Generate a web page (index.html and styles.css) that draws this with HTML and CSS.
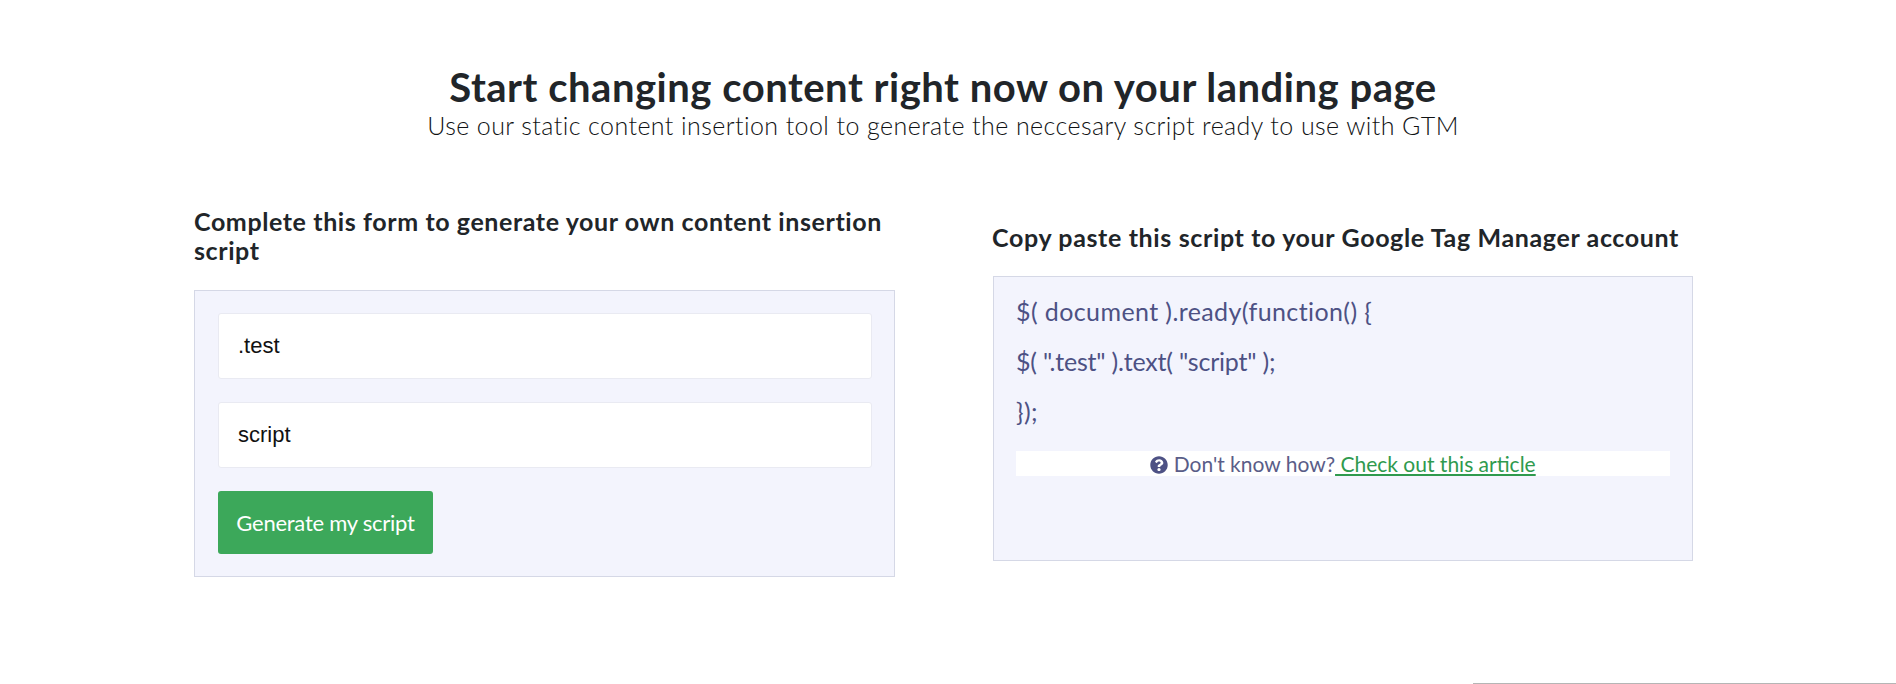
FILE: index.html
```html
<!DOCTYPE html>
<html lang="en">
<head>
<meta charset="utf-8">
<title>Static content insertion tool</title>
<link rel="stylesheet" href="styles.css">
</head>
<body>
<main class="page">
  <header class="intro">
    <h1 class="intro-title">Start changing content right now on your landing page</h1>
    <p class="intro-sub">Use our static content insertion tool to generate the neccesary script ready to use with GTM</p>
  </header>
  <section class="columns">
    <div class="col">
      <h2 class="col-title col-title-form">Complete this form to generate your own content insertion script</h2>
      <form class="panel form-panel">
        <input class="field" type="text" value=".test">
        <input class="field" type="text" value="script">
        <button class="btn" type="button">Generate my script</button>
      </form>
    </div>
    <div class="col">
      <h2 class="col-title">Copy paste this script to your Google Tag Manager account</h2>
      <div class="panel code-panel">
        <p class="code-line">$( document ).ready(function() {</p>
        <p class="code-line code-line-tight">$( ".test" ).text( "script" );</p>
        <p class="code-line">});</p>
        <p class="help">
          <svg class="help-icon" viewBox="0 0 512 512" aria-hidden="true"><path d="M504 256c0 136.997-111.043 248-248 248S8 392.997 8 256C8 119.083 119.043 8 256 8s248 111.083 248 248zM262.655 90c-54.497 0-89.255 22.957-116.549 63.758-3.536 5.286-2.353 12.415 2.715 16.258l34.699 26.31c5.205 3.947 12.621 3.008 16.665-2.122 17.864-22.658 30.113-35.797 57.303-35.797 20.429 0 45.698 13.148 45.698 32.958 0 14.976-12.363 22.667-32.534 33.976C247.128 238.528 216 254.941 216 296v4c0 6.627 5.373 12 12 12h56c6.627 0 12-5.373 12-12v-1.333c0-28.462 83.186-29.647 83.186-106.667 0-58.002-60.165-102-116.531-102zM256 338c-25.365 0-46 20.635-46 46 0 25.364 20.635 46 46 46s46-20.636 46-46c0-25.365-20.635-46-46-46z"/></svg>
          Don't know how?<a class="help-link" href="#"> Check out this article</a>
        </p>
      </div>
    </div>
  </section>
</main>
<div class="edge"></div>
</body>
</html>
```
FILE: styles.css
```css
* { box-sizing: border-box; }
html, body { margin: 0; padding: 0; }
body {
  height: 684px;
  overflow: hidden;
  display: flex;
  flex-direction: column;
  background: #fff;
  font-family: Lato, "Open Sans", sans-serif;
  color: #212529;
}
.page { flex: 1; padding: 0 203px 0 194px; }
.intro { padding-top: 62px; text-align: center; margin-left: -1px; }
.intro-title {
  margin: 0;
  font-size: 40px;
  line-height: 50px;
  font-weight: 700;
  color: #212529;
  letter-spacing: 0.52px;
}
.intro-sub {
  margin: 0;
  font-size: 25px;
  line-height: 26px;
  font-weight: 300;
  color: #101214;
  letter-spacing: 0.42px;
}
.columns {
  display: grid;
  grid-template-columns: 701px 700px;
  column-gap: 98px;
  align-items: center;
  margin-top: 69px;
}
.col-title {
  margin: 0 0 24px;
  font-size: 25px;
  line-height: 29px;
  font-weight: 700;
  color: #212529;
  letter-spacing: 0.64px;
  margin-left: -1px;
}
.col-title-form { margin: 0 0 25px; letter-spacing: 0.6px; }
.panel {
  background: #f3f4fd;
  border: 1px solid #d5d8e6;
  padding: 22px;
}
.form-panel { display: flex; flex-direction: column; align-items: flex-start; padding: 22px 22px 22px 23px; }
.field {
  display: block;
  flex: none;
  width: 100%;
  height: 66px;
  margin-bottom: 23px;
  padding: 0 19px;
  background: #fff;
  border: 1px solid #e9eaf2;
  border-radius: 3px;
  font-family: "Liberation Sans", Arial, sans-serif;
  font-size: 22px;
  color: #111;
  outline: none;
}
.btn {
  flex: none;
  width: 215px;
  height: 63px;
  padding: 0;
  background: #3ca85a;
  border: 0;
  border-radius: 3px;
  font-family: Lato, sans-serif;
  font-size: 22px;
  letter-spacing: -0.25px;
  color: #fff;
}
.code-panel { height: 285px; padding-top: 17px; color: #4d5184; }
.code-line {
  margin: 0 0 16px;
  font-size: 25px;
  line-height: 34px;
  font-weight: 400;
  color: #4d5184;
  letter-spacing: 0.4px;
}
.code-line-tight { letter-spacing: -0.2px; }
.help {
  margin: 23px 0 0;
  height: 25px;
  background: #fff;
  text-align: center;
  font-size: 21px;
  line-height: 25px;
  color: #5a5d88;
}
.help-icon { width: 18px; height: 18px; vertical-align: -2px; fill: #4d5184; }
.help-link { color: #2f9a4e; text-decoration: underline; font-weight: 400; }
.edge {
  flex: none;
  width: 423px;
  height: 1px;
  margin-left: auto;
  background: #b5b5b5;
}
```
